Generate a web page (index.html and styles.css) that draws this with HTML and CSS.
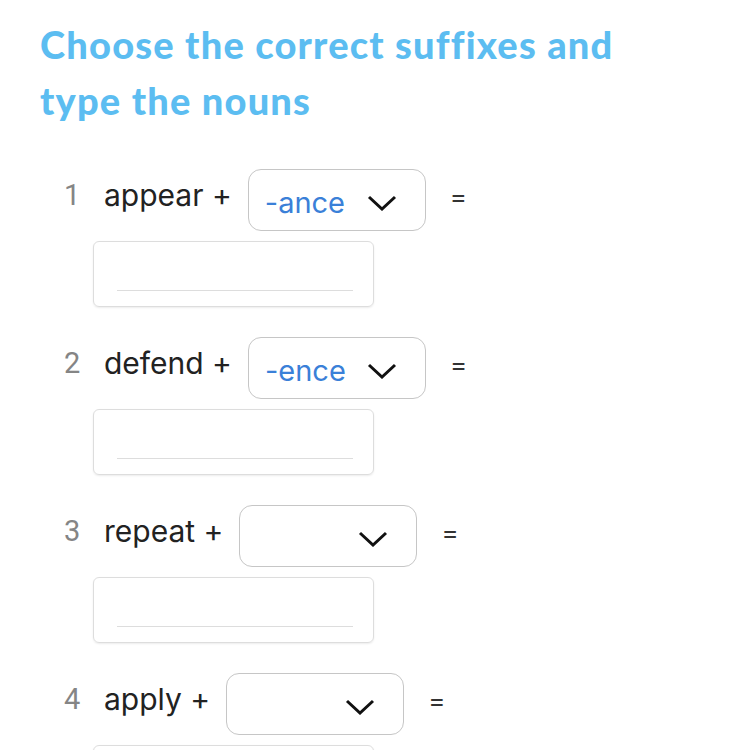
FILE: index.html
```html
<!DOCTYPE html>
<html lang="en">
<head>
  <meta charset="UTF-8">
  <meta name="viewport" content="width=device-width, initial-scale=1.0">
  <title>Suffixes</title>
  <link rel="stylesheet" href="styles.css">
</head>
<body>
  <div class="exercise">
    <h1>Choose the correct suffixes and type the nouns</h1>

    <div class="question">
      <div class="line">
        <span class="num">1</span>
        <span class="word">appear +</span>
        <div class="select">
          <span class="choice">-ance</span>
          <svg class="chevron" width="30" height="16" viewBox="0 0 30 16"><path d="M2 2 L15 14 L28 2" fill="none" stroke="#111" stroke-width="3"/></svg>
        </div>
        <span class="eq">=</span>
      </div>
      <div class="answer"><div class="underline"></div></div>
    </div>

    <div class="question">
      <div class="line">
        <span class="num">2</span>
        <span class="word">defend +</span>
        <div class="select">
          <span class="choice">-ence</span>
          <svg class="chevron" width="30" height="16" viewBox="0 0 30 16"><path d="M2 2 L15 14 L28 2" fill="none" stroke="#111" stroke-width="3"/></svg>
        </div>
        <span class="eq">=</span>
      </div>
      <div class="answer"><div class="underline"></div></div>
    </div>

    <div class="question">
      <div class="line">
        <span class="num">3</span>
        <span class="word">repeat +</span>
        <div class="select">
          <span class="choice"></span>
          <svg class="chevron" width="30" height="16" viewBox="0 0 30 16"><path d="M2 2 L15 14 L28 2" fill="none" stroke="#111" stroke-width="3"/></svg>
        </div>
        <span class="eq">=</span>
      </div>
      <div class="answer"><div class="underline"></div></div>
    </div>

    <div class="question">
      <div class="line">
        <span class="num">4</span>
        <span class="word">apply +</span>
        <div class="select">
          <span class="choice"></span>
          <svg class="chevron" width="30" height="16" viewBox="0 0 30 16"><path d="M2 2 L15 14 L28 2" fill="none" stroke="#111" stroke-width="3"/></svg>
        </div>
        <span class="eq">=</span>
      </div>
      <div class="answer"><div class="underline"></div></div>
    </div>
  </div>
</body>
</html>
```

FILE: styles.css
```css
body {
  margin: 0;
  background: #fff;
  font-family: Inter, "Noto Sans", sans-serif;
  color: #222;
  overflow: hidden;
}
.exercise {
  padding: 16px 40px 0;
}
h1 {
  max-width: 610px;
  margin: 0 0 41px;
  font-family: Lato, sans-serif;
  font-weight: 900;
  font-size: 38px;
  line-height: 56px;
  color: #5cbdf1;
  letter-spacing: 1.2px;
}
.question {
  margin-bottom: 30px;
}
.line {
  display: flex;
  align-items: center;
  height: 62px;
}
.num {
  width: 64px;
  padding-left: 24px;
  margin-bottom: 10px;
  box-sizing: border-box;
  font-family: Roboto, sans-serif;
  font-size: 29px;
  color: #858585;
}
.word {
  font-size: 30px;
  margin: 0 16px 10px 0;
}
.select {
  width: 178px;
  height: 62px;
  box-sizing: border-box;
  border: 1.5px solid #c6c6c6;
  border-radius: 13px;
  display: flex;
  align-items: center;
  justify-content: space-between;
  padding: 4px 28px 0 16px;
}
.choice {
  font-size: 29px;
  color: #3a80d8;
}
.chevron {
  margin-top: 2px;
}
.eq {
  margin: 0 0 8px 24px;
  font-size: 26px;
  color: #333;
}
.answer {
  width: 281px;
  height: 66px;
  margin: 10px 0 0 53px;
  box-sizing: border-box;
  border: 1.5px solid #ddd;
  border-radius: 6px;
  box-shadow: 0 1px 2px rgba(0,0,0,0.08);
  padding: 48px 20px 0 23px;
}
.underline {
  border-top: 1.5px solid #ddd;
}
```
